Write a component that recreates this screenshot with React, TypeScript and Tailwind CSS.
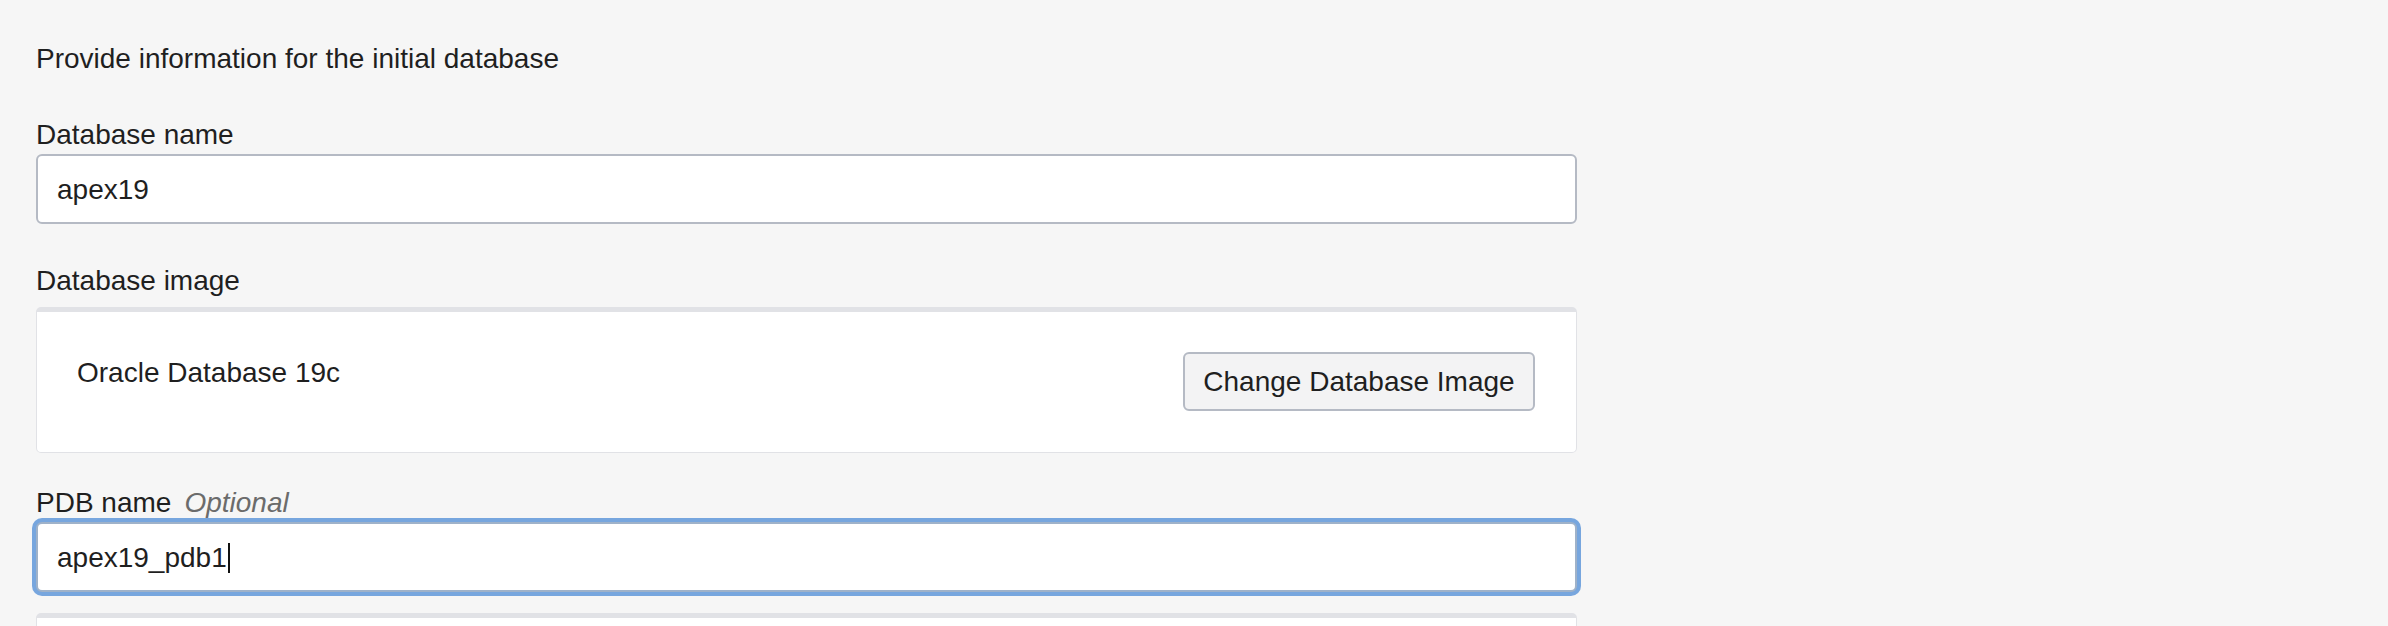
import { FC } from "react";

const Label: FC<{ text: string; optional?: boolean; className?: string }> = ({ text, optional, className }) => (
    <div className={"flex items-baseline text-[28px] leading-[34px] text-[#1f1f1f] " + (className || "")}>
        <span>{text}</span>
        {optional && <span className="ml-[13px] italic text-[#6b6b6b]">Optional</span>}
    </div>
);

const App: FC = () => {
    return (
        <div
            className="min-h-screen bg-[#f6f6f6] pl-[36px] pt-[42px]"
            style={{ fontFamily: '"Liberation Sans", Arial, sans-serif' }}
        >
            <div className="w-[1541px]">
                <div className="text-[28px] leading-[34px] text-[#1f1f1f]">
                    Provide information for the initial database
                </div>

                {/* database name */}
                <Label text="Database name" className="mt-[42px]" />
                <div className="mt-[2px] flex h-[70px] items-center rounded-[6px] border-2 border-[#b5bac4] bg-white pl-[19px] pt-[2px] text-[28px] text-[#1f1f1f]">
                    apex19
                </div>

                {/* database image */}
                <Label text="Database image" className="mt-[40px]" />
                <div className="mt-[9px] flex items-start justify-between rounded-[5px] border border-t-[5px] border-[#e1e2e6] bg-white pt-[40px] pb-[41px] pl-[40px] pr-[41px]">
                    <div className="pt-[4px] text-[28px] leading-[34px] text-[#1f1f1f]">Oracle Database 19c</div>
                    <button className="h-[59px] w-[352px] rounded-[6px] border-2 border-[#b5bac4] bg-[#f3f3f4] text-[28px] leading-[34px] text-[#1f1f1f]">
                        Change Database Image
                    </button>
                </div>

                {/* pdb name */}
                <Label text="PDB name" optional className="mt-[33px]" />
                <div className="mt-[2px] flex h-[70px] items-center rounded-[6px] border-2 border-[#9fb2c9] bg-white pl-[19px] pt-[2px] text-[28px] text-[#1f1f1f] shadow-[0_0_0_4px_#77a6de]">
                    <span>apex19_pdb1</span>
                    <span className="ml-[1px] inline-block h-[30px] w-[2px] bg-[#111]" />
                </div>

                <div className="mt-[21px] h-[80px] rounded-[5px] border border-t-[5px] border-[#e1e2e6] bg-white" />
            </div>
        </div>
    );
};

export default App;
